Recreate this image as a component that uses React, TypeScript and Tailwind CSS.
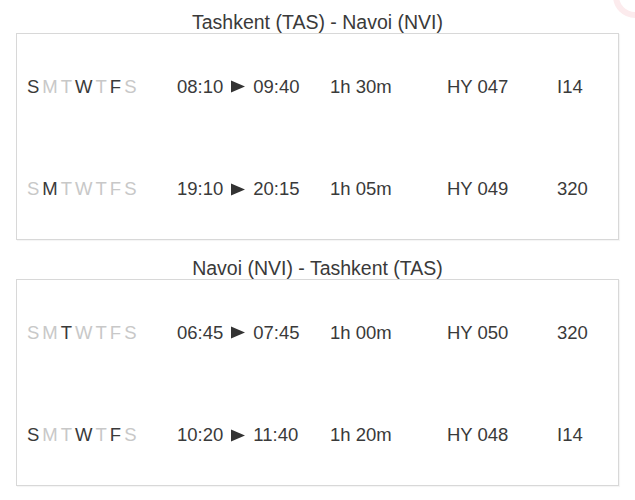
const font = { fontFamily: '"Liberation Sans", Arial, sans-serif' };

type Flight = {
  days: boolean[];
  dep: string;
  arr: string;
  dur: string;
  no: string;
  ac: string;
};

const routes: { title: string; flights: Flight[] }[] = [
  {
    title: "Tashkent (TAS) - Navoi (NVI)",
    flights: [
      { days: [true, false, false, true, false, true, false], dep: "08:10", arr: "09:40", dur: "1h 30m", no: "HY 047", ac: "I14" },
      { days: [false, true, false, false, false, false, false], dep: "19:10", arr: "20:15", dur: "1h 05m", no: "HY 049", ac: "320" },
    ],
  },
  {
    title: "Navoi (NVI) - Tashkent (TAS)",
    flights: [
      { days: [false, false, true, false, false, false, false], dep: "06:45", arr: "07:45", dur: "1h 00m", no: "HY 050", ac: "320" },
      { days: [true, false, false, true, false, true, false], dep: "10:20", arr: "11:40", dur: "1h 20m", no: "HY 048", ac: "I14" },
    ],
  },
];

const letters = ["S", "M", "T", "W", "T", "F", "S"];

function Days({ on }: { on: boolean[] }) {
  return (
    <div className="flex gap-[3px]">
      {letters.map((l, i) => (
        <span key={i} className={on[i] ? "text-[#3a3a3a]" : "text-[#c8c8c8]"}>
          {l}
        </span>
      ))}
    </div>
  );
}

export default function App() {
  return (
    <div className="relative h-[500px] w-[635px] overflow-hidden bg-white px-4 pt-[12px] text-[#3a3a3a]" style={font}>
      {/* faint pink ring peeking in at the top right */}
      <div className="absolute -right-[22px] -top-[26px] h-[44px] w-[44px] rounded-full border-[6px] border-[#fcebed]" />
      {routes.map((r, ri) => (
        <div key={ri} className={ri > 0 ? "mt-[18px]" : ""}>
          <div className="text-center text-[19.5px] leading-[21px]">{r.title}</div>
          <div className="border border-[#d8d8d8] shadow-[1px_1px_1px_rgba(0,0,0,0.04)]">
            {r.flights.map((f, fi) => (
              <div
                key={fi}
                className="grid h-[102.5px] grid-cols-[150px_153px_117px_110px_1fr] items-center pl-[10px] pt-[3px] text-[18.5px]"
              >
                <Days on={f.days} />
                <div className="flex items-center">
                  {f.dep}
                  <svg className="mx-[8px]" width="14" height="13" viewBox="0 0 14 13">
                    <path d="M0 0.5 L14 6.5 L0 12.5 Z" fill="#333" />
                  </svg>
                  {f.arr}
                </div>
                <div>{f.dur}</div>
                <div>{f.no}</div>
                <div>{f.ac}</div>
              </div>
            ))}
          </div>
        </div>
      ))}
    </div>
  );
}
